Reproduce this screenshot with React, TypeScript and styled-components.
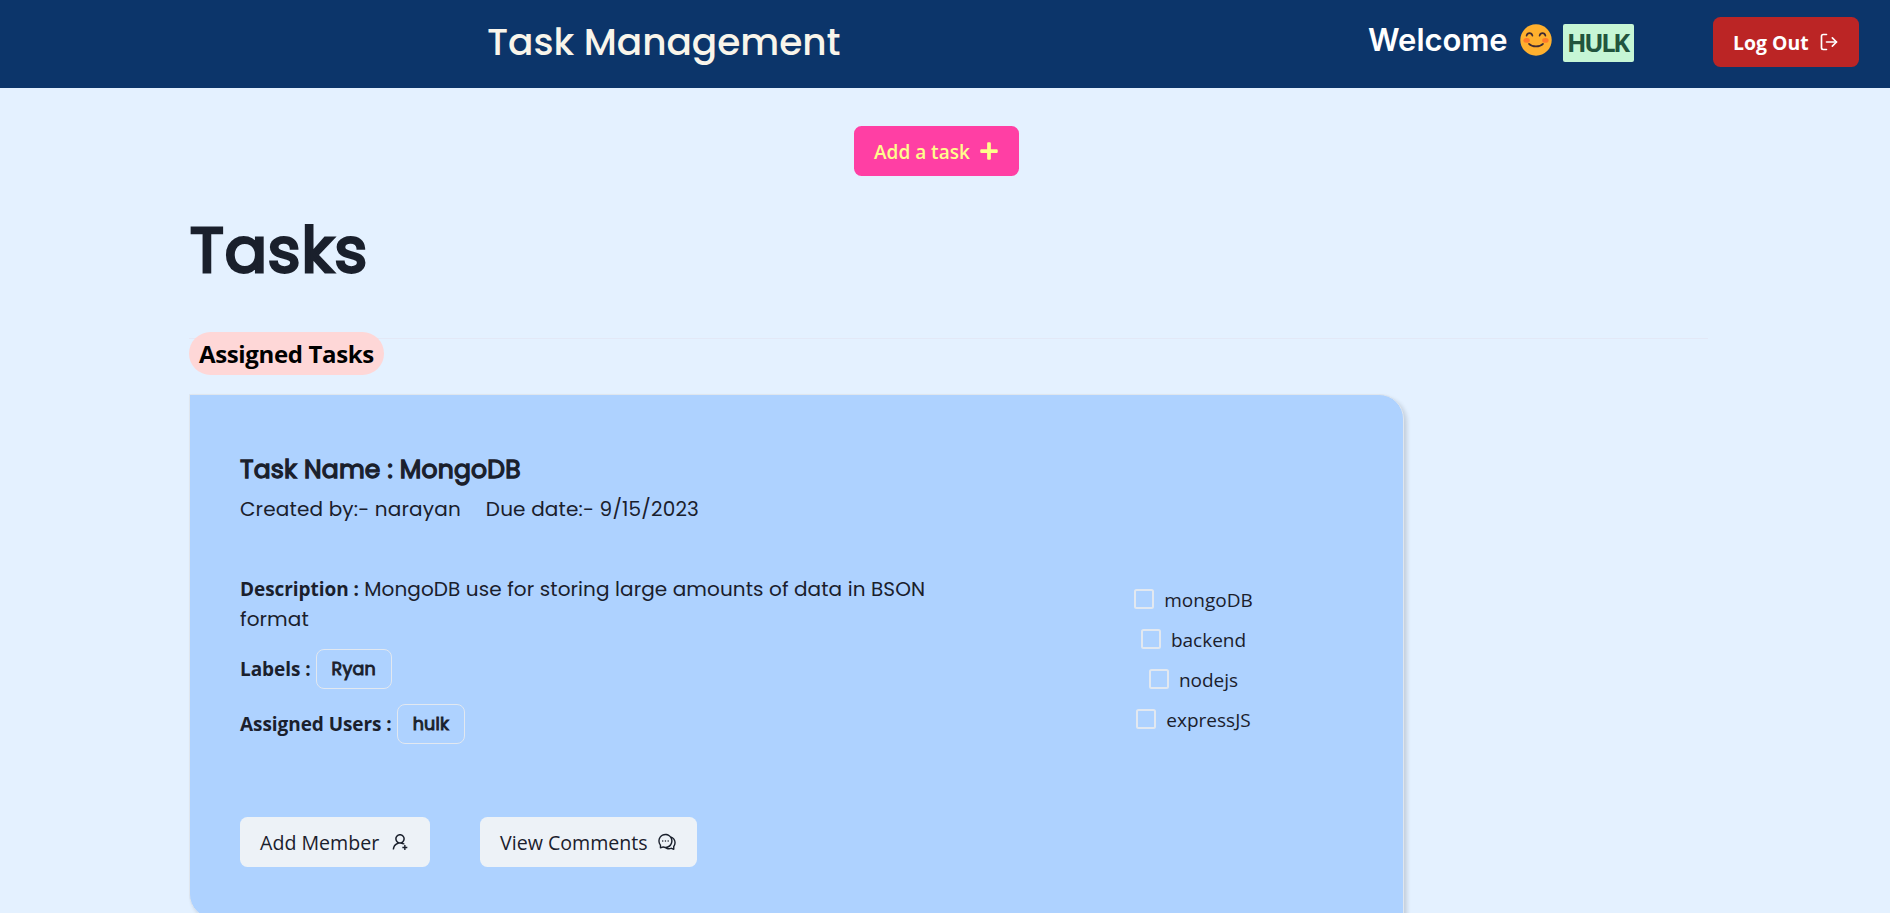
import React from "react";
import styled, { createGlobalStyle } from "styled-components";
import { FiLogOut } from "react-icons/fi";
import { FaPlus } from "react-icons/fa";
import { AiOutlineComment, AiOutlineUserAdd } from "react-icons/ai";

const headingFont = `Poppins, Inter, "Liberation Sans", sans-serif`;
const uiFont = `"Open Sans", "Noto Sans", sans-serif`;

const GlobalStyle = createGlobalStyle`
  *, *::before, *::after { box-sizing: border-box; }
  html, body { margin: 0; height: 100%; overflow: hidden; }
  body {
    background: #e4f1ff;
    color: #1a202c;
    font: 400 19px/30px ${uiFont};
  }
  h1, h2, h3, p { margin: 0; }
`;

const Page = styled.div`
  height: 100vh;
  overflow: hidden;
`;

const Header = styled.header`
  display: flex;
  align-items: flex-start;
  height: 88px;
  padding: 17px 31px 0 487px;
  background: #0c356a;
`;

const Brand = styled.h1`
  flex: 1;
  margin-top: -5px;
  font: 500 37.5px/60px ${headingFont};
  letter-spacing: -0.06px;
  color: #f9f5eb;
`;

const Greeting = styled.div`
  display: flex;
  margin: 7px 79px 0 0;
  color: #fff;
`;

const Welcome = styled.span`
  margin-top: -3px;
  width: 152px;
  font: 600 31px/38px Inter, sans-serif;
`;

const UserName = styled.span`
  width: 71px;
  height: 38px;
  margin-left: 11px;
  padding-left: 4px;
  border-radius: 2px;
  background: #c6f6d5;
  color: #22543d;
  font: 700 25.5px/36px ${uiFont};
  letter-spacing: -2.3px;
`;

type Tone = "danger" | "accent" | "plain";

const tones: Record<Tone, { bg: string; fg: string; font: string }> = {
  danger: { bg: "#bb2525", fg: "#ffffff", font: "700 19.4px/24px" },
  accent: { bg: "#ff3fa4", fg: "#fffd8c", font: "600 19px/24px" },
  plain: { bg: "#edf2f7", fg: "#1a202c", font: "500 19.6px/24px" },
};

const Button = styled.button<{ $tone: Tone; $width: number }>`
  display: flex;
  align-items: center;
  justify-content: space-between;
  width: ${(p) => p.$width}px;
  height: 50px;
  padding: 0 20px;
  border: 0;
  border-radius: 7.5px;
  background: ${(p) => tones[p.$tone].bg};
  color: ${(p) => tones[p.$tone].fg};
  font: ${(p) => tones[p.$tone].font} ${uiFont};
  white-space: nowrap;
`;

const ButtonLabel = styled.span`
  padding-top: 1px;
`;

const Toolbar = styled.div`
  display: flex;
  padding: 38px 0 0 854px;
`;

const Main = styled.main`
  margin-left: 189px;
  width: 1519px;
`;

const PageTitle = styled.h2`
  margin-top: 34px;
  padding-left: 1px;
  font: 400 62.5px/80px ${headingFont};
  letter-spacing: 0.9px;
  -webkit-text-stroke: 3px currentColor;
`;

const Section = styled.section`
  margin-top: 48px;
  border-top: 1px solid #e3e8f6;
`;

const SectionTag = styled.h3`
  width: 195px;
  height: 43px;
  margin-top: -7px;
  padding-left: 10px;
  border-radius: 22px;
  background: #fed7d7;
  color: #000;
  font: 700 24px/44px ${uiFont};
  letter-spacing: -0.35px;
  white-space: nowrap;
`;

const Card = styled.article`
  width: 1215px;
  height: 525px;
  margin-top: 19px;
  padding: 50px;
  border: 1px solid #dfe6ee;
  border-radius: 0 25px;
  background: #aed2ff;
  box-shadow: 3px 3px 4px rgba(0, 0, 0, 0.14);
`;

const TaskTitle = styled.h3`
  margin-top: 10px;
  font: 400 25px/30px ${headingFont};
  letter-spacing: 0.2px;
  -webkit-text-stroke: 1.3px currentColor;
`;

const Meta = styled.div`
  display: flex;
  gap: 25px;
  margin-top: 9px;
  font: 400 20px/30px ${headingFont};
  letter-spacing: 0.16px;
`;

const Details = styled.div`
  display: flex;
  margin-top: 50px;
`;

const Facts = styled.div`
  width: 797px;
`;

const Description = styled.p`
  width: 700px;
  font: 400 20px/30px ${headingFont};
  letter-spacing: 0.09px;
`;

const FieldName = styled.span`
  font: 700 19px/24px ${uiFont};
  letter-spacing: -0.06px;
`;

const Field = styled.div`
  display: flex;
  align-items: center;
  gap: 5px;
  height: 40px;
  margin-top: 15px;
`;

const Pill = styled.span`
  height: 40px;
  padding: 0 15px;
  border: 1px solid #e2e8f0;
  border-radius: 8px;
  font: 400 17.5px/38px ${headingFont};
  letter-spacing: 0.2px;
  -webkit-text-stroke: 0.9px currentColor;
`;

const Checklist = styled.div`
  display: flex;
  flex-direction: column;
  align-items: center;
  gap: 10px;
  width: 313px;
  padding-top: 10px;
`;

const CheckItem = styled.label`
  display: flex;
  align-items: center;
  gap: 10px;
  height: 30px;
`;

const CheckText = styled.span`
  padding-top: 1px;
`;

const Box = styled.span`
  width: 20px;
  height: 20px;
  border: 2px solid #e2e8f0;
  border-radius: 2.5px;
`;

const Actions = styled.div`
  display: flex;
  gap: 50px;
  margin-top: 73px;
`;

const Smiley = () => (
  <svg width="32" height="32" viewBox="0 0 32 32" fill="none">
    <circle cx="16" cy="16" r="15.7" fill="#ffb02e" />
    <ellipse cx="6.6" cy="16.4" rx="3.2" ry="2.4" fill="#ff7a2a" />
    <ellipse cx="25.4" cy="16.4" rx="3.2" ry="2.4" fill="#ff7a2a" />
    <path
      d="M6.6 11.6C7.4 8.2 11.6 8.2 12.4 11.6M19.6 11.6C20.4 8.2 24.6 8.2 25.4 11.6M9 19.8C12.2 23.2 19.8 23.2 23 19.8"
      stroke="#402a32"
      strokeWidth="1.7"
      strokeLinecap="round"
    />
  </svg>
);

const steps = ["mongoDB", "backend", "nodejs", "expressJS"];

export default function App() {
  return (
    <Page>
      <GlobalStyle />
      <Header>
        <Brand>Task Management</Brand>
        <Greeting>
          <Welcome>Welcome</Welcome>
          <Smiley />
          <UserName>HULK</UserName>
        </Greeting>
        <Button $tone="danger" $width={146}>
          <ButtonLabel>Log Out</ButtonLabel>
          <FiLogOut size={20} />
        </Button>
      </Header>
      <Toolbar>
        <Button $tone="accent" $width={165}>
          <ButtonLabel>Add a task</ButtonLabel>
          <FaPlus size={20} />
        </Button>
      </Toolbar>
      <Main>
        <PageTitle>Tasks</PageTitle>
        <Section>
          <SectionTag>Assigned Tasks</SectionTag>
          <Card>
            <TaskTitle>Task Name : MongoDB</TaskTitle>
            <Meta>
              <span>Created by:- narayan</span>
              <span>Due date:- 9/15/2023</span>
            </Meta>
            <Details>
              <Facts>
                <Description>
                  <FieldName>Description :</FieldName> MongoDB use for storing large
                  amounts of data in BSON format
                </Description>
                <Field>
                  <FieldName>Labels :</FieldName>
                  <Pill>Ryan</Pill>
                </Field>
                <Field>
                  <FieldName>Assigned Users :</FieldName>
                  <Pill>hulk</Pill>
                </Field>
              </Facts>
              <Checklist>
                {steps.map((step) => (
                  <CheckItem key={step}>
                    <Box />
                    <CheckText>{step}</CheckText>
                  </CheckItem>
                ))}
              </Checklist>
            </Details>
            <Actions>
              <Button $tone="plain" $width={190}>
                <ButtonLabel>Add Member</ButtonLabel>
                <AiOutlineUserAdd size={20} />
              </Button>
              <Button $tone="plain" $width={217}>
                <ButtonLabel>View Comments</ButtonLabel>
                <AiOutlineComment size={20} />
              </Button>
            </Actions>
          </Card>
        </Section>
      </Main>
    </Page>
  );
}
